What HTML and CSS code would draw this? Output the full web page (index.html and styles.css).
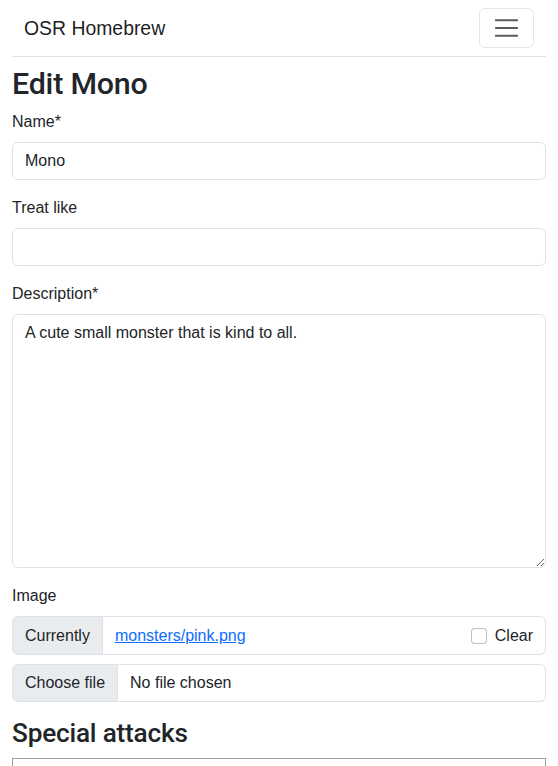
FILE: index.html
```html
<!DOCTYPE html>
<html lang="en">
<head>
<meta charset="utf-8">
<title>Edit Mono</title>
<link rel="stylesheet" href="styles.css">
</head>
<body>
<div class="container">
  <nav class="navbar">
    <div class="navbar-inner">
      <a class="brand" href="#">OSR Homebrew</a>
      <button class="toggler" type="button" aria-label="Toggle navigation">
        <svg width="30" height="30" viewBox="0 0 30 30"><path stroke="rgba(33,37,41,0.75)" stroke-linecap="round" stroke-miterlimit="10" stroke-width="2" d="M4 7h22M4 15h22M4 23h22"/></svg>
      </button>
    </div>
  </nav>
  <h1 class="title">Edit Mono</h1>
  <form>
    <div class="field">
      <label class="label" for="name">Name*</label>
      <input class="control" id="name" type="text" value="Mono">
    </div>
    <div class="field">
      <label class="label" for="treat">Treat like</label>
      <input class="control" id="treat" type="text">
    </div>
    <div class="field">
      <label class="label" for="desc">Description*</label>
      <textarea class="control textarea" id="desc" rows="10">A cute small monster that is kind to all.</textarea>
    </div>
    <div class="field">
      <label class="label">Image</label>
      <div class="group group-sm">
        <span class="addon">Currently</span>
        <div class="control grouped current">
          <a href="#" class="link">monsters/pink.png</a>
          <label class="check"><input type="checkbox" class="check-input"><span>Clear</span></label>
        </div>
      </div>
      <div class="group">
        <span class="addon">Choose file</span>
        <div class="control grouped">No file chosen</div>
      </div>
    </div>
    <h2 class="subtitle">Special attacks</h2>
    <div class="formset"></div>
  </form>
</div>
</body>
</html>
```
FILE: styles.css
```css
* { box-sizing: border-box; }
html, body { margin: 0; padding: 0; }
body {
  font-family: "Liberation Sans", Arial, sans-serif;
  font-size: 16px;
  line-height: 1.5;
  color: #212529;
  background: #fff;
}
.container { padding: 0 12px; }
.navbar {
  border-bottom: 1px solid #dee2e6;
  padding: 8px 0;
  margin-bottom: 9px;
}
.navbar-inner {
  display: flex;
  justify-content: space-between;
  align-items: center;
  padding: 0 12px;
}
.brand {
  font-size: 19.4px;
  line-height: 30px;
  padding: 5px 0;
  color: rgba(0,0,0,0.9);
  text-decoration: none;
}
.toggler {
  width: 55px;
  height: 40px;
  padding: 4px 12px;
  background: transparent;
  border: 1px solid rgba(0,0,0,0.1);
  border-radius: 6px;
  display: flex;
  align-items: center;
  justify-content: center;
}
.toggler svg { display: block; }
.title, .subtitle {
  font-family: Roboto, "Liberation Sans", Arial, sans-serif;
  font-weight: 500;
  line-height: 1.2;
  margin: 0 0 8px;
  letter-spacing: -0.2px;
}
.title { font-size: 30.4px; }
.subtitle { font-size: 26.2px; margin-top: 2px; }
.field { margin-bottom: 16px; }
.label { display: inline-block; margin-bottom: 8px; }
.control {
  display: block;
  width: 100%;
  padding: 6px 12px;
  font: inherit;
  font-size: 16px;
  line-height: 1.5;
  color: #212529;
  background: #fff;
  border: 1px solid #dee2e6;
  border-radius: 6px;
}
.textarea { height: 254px; resize: vertical; }
.group {
  display: flex;
  align-items: stretch;
  width: 100%;
}
.group-sm { margin-bottom: 9px; min-height: 39px; }
.addon {
  display: flex;
  align-items: center;
  padding: 6px 12px;
  background: #e9ecef;
  border: 1px solid #dee2e6;
  border-radius: 6px 0 0 6px;
  white-space: nowrap;
}
.grouped {
  flex: 1;
  border-left: 0;
  border-radius: 0 6px 6px 0;
}
.current { display: flex; justify-content: space-between; align-items: center; }
.link { color: #0d6efd; text-decoration: underline; }
.check { display: flex; align-items: center; gap: 8px; }
.check-input {
  appearance: none;
  width: 16px;
  height: 16px;
  margin: 0;
  border: 1px solid rgba(0,0,0,0.25);
  border-radius: 4px;
  background: #fff;
}
.formset {
  border: 1px solid #a0a0a0;
  height: 60px;
}
```
